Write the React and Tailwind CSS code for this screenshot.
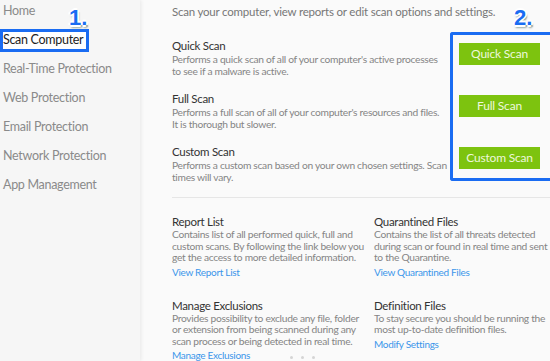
import React from 'react';

const navItems = [
  'Home',
  'Scan Computer',
  'Real-Time Protection',
  'Web Protection',
  'Email Protection',
  'Network Protection',
  'App Management',
];

const scans = [
  {
    title: 'Quick Scan',
    lines: ["Performs a quick scan of all of your computer's active processes", 'to see if a malware is active.'],
  },
  {
    title: 'Full Scan',
    lines: ["Performs a full scan of all of your computer's resources and files.", 'It is thorough but slower.'],
  },
  {
    title: 'Custom Scan',
    lines: ['Performs a custom scan based on your own chosen settings. Scan', 'times will vary.'],
  },
];

const tools = [
  {
    title: 'Report List',
    lines: [
      'Contains list of all performed quick, full and',
      'custom scans. By following the link below you',
      'get the access to more detailed information.',
    ],
    link: 'View Report List',
  },
  {
    title: 'Quarantined Files',
    lines: [
      'Contains the list of all threats detected',
      'during scan or found in real time and sent',
      'to the Quarantine.',
    ],
    link: 'View Quarantined Files',
  },
  {
    title: 'Manage Exclusions',
    lines: [
      'Provides possibility to exclude any file, folder',
      'or extension from being scanned during any',
      'scan process or being detected in real time.',
    ],
    link: 'Manage Exclusions',
  },
  {
    title: 'Definition Files',
    lines: ['To stay secure you should be running the', 'most up-to-date definition files.'],
    link: 'Modify Settings',
  },
];

const marker =
  'absolute font-bold text-[22px] leading-none text-[#1a6cf2] [font-family:"Liberation_Sans",sans-serif] [text-shadow:-2px_0_0_#fff,2px_0_0_#fff,0_-2px_0_#fff,0_2px_0_#fff,2px_2px_1px_#9aa,1px_3px_2px_#9aa]';

const descCls = 'text-[10.25px] tracking-[-0.3px] text-[#858585] whitespace-nowrap';
const titleCls = 'text-[11.5px] leading-[15px] tracking-[-0.3px] text-[#333]';

function Sidebar() {
  return (
    <div className="relative w-[140px] shrink-0 bg-[#f6f6f6] shadow-[1px_0_4px_rgba(0,0,0,0.08)] z-10">
      <div className="flex flex-col -mt-[3px]">
        {navItems.map((item) => (
          <div key={item} className="h-[29px] shrink-0 flex items-center whitespace-nowrap text-[12.5px] tracking-[-0.3px]">
            {item === 'Scan Computer' ? (
              <div className="h-[23px] w-[89px] border-[3px] border-[#1a6cf2] bg-white flex items-center text-[#222]">
                {item}
              </div>
            ) : (
              <span className="pl-[3px] text-[#8a8a8a]">{item}</span>
            )}
          </div>
        ))}
      </div>
      <span className={`${marker} left-[69px] top-[7px]`}>1.</span>
    </div>
  );
}

export default function App() {
  return (
    <div
      className="relative flex w-[550px] h-[361px] overflow-hidden bg-[#fafafa]"
      style={{ fontFamily: 'Lato, "Open Sans", sans-serif' }}
    >
      <Sidebar />
      <div className="flex-1 flex flex-col">
        <p className="shrink-0 pl-[32px] pt-[3px] h-[32px] text-[11.5px] tracking-[-0.2px] text-[#777] whitespace-nowrap">
          Scan your computer, view reports or edit scan options and settings.
        </p>

        <div className="shrink-0 flex items-start">
          <div className="pl-[32px] pt-[6px] w-[310px]">
            {scans.map((s) => (
              <div key={s.title} className="h-[53px]">
                <h3 className={titleCls}>{s.title}</h3>
                {s.lines.map((l) => (
                  <p key={l} className={`${descCls} leading-[12px]`}>{l}</p>
                ))}
              </div>
            ))}
          </div>
          <div className="flex-1 border-[3px] border-r-0 border-[#1a6cf2] rounded-l-[3px] pl-[6px] pt-[8px] pb-[9px] flex flex-col gap-[30px]">
            {scans.map((s) => (
              <button
                key={s.title}
                className="w-[81px] h-[22px] bg-[#7dc30f] text-[#eef8dc] text-[12px] tracking-[-0.2px] leading-none flex items-center justify-center"
              >
                {s.title}
              </button>
            ))}
          </div>
        </div>

        <div className="shrink-0 ml-[32px] border-t border-[#e6e6e6] grid grid-cols-[202px_1fr] pt-[16px] gap-y-[19px]">
          {tools.map((t) => (
            <div key={t.title}>
              <h3 className={titleCls}>{t.title}</h3>
              {t.lines.map((l) => (
                <p key={l} className={`${descCls} leading-[11.5px]`}>{l}</p>
              ))}
              <a className="block mt-[1px] text-[10px] tracking-[-0.3px] leading-[14px] text-[#3b96ea]">{t.link}</a>
            </div>
          ))}
        </div>
      </div>
      <span className={`${marker} left-[514px] top-[7px]`}>2.</span>
      <div className="absolute left-[290px] top-[356px] flex gap-[8px]">
        <span className="w-[3px] h-[3px] rounded-full bg-[#d5d5d5]" />
        <span className="w-[3px] h-[3px] rounded-full bg-[#d5d5d5]" />
        <span className="w-[3px] h-[3px] rounded-full bg-[#d5d5d5]" />
      </div>
    </div>
  );
}
